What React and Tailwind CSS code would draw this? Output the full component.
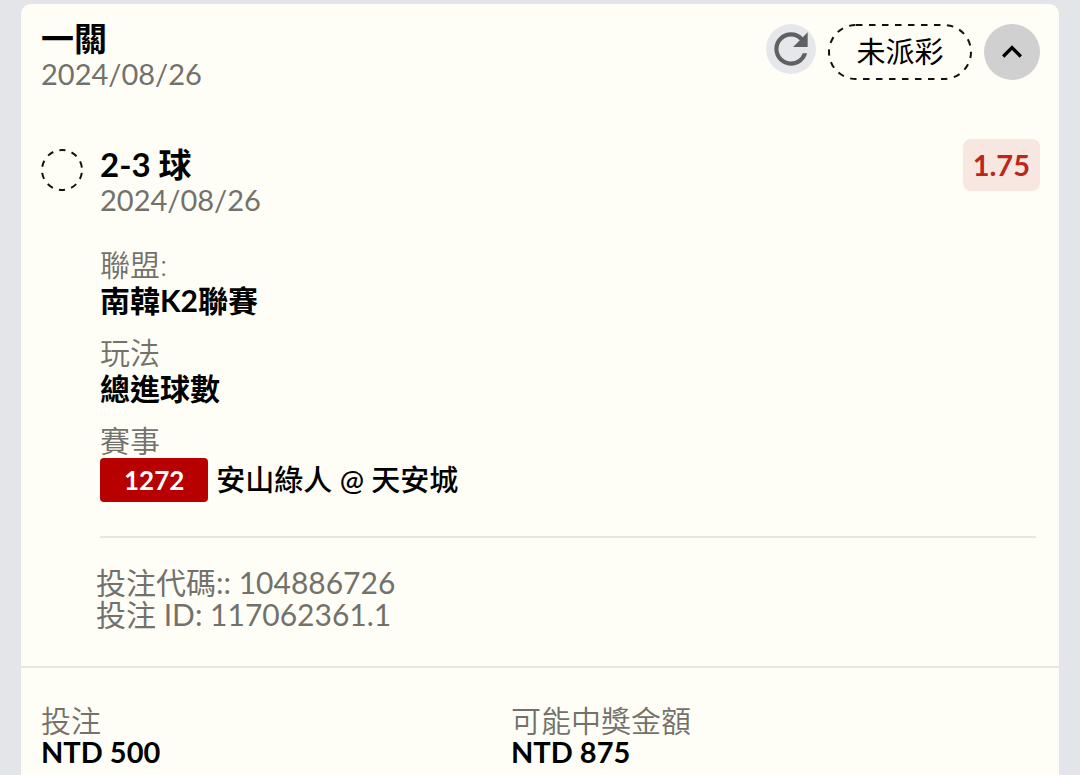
import { MdExpandLess, MdRefresh } from "react-icons/md";

function Field({ label, children, className = "font-bold" }) {
  return (
    <div>
      <dt className="font-[350] text-[#72716c]">{label}</dt>
      <dd className={className}>{children}</dd>
    </div>
  );
}

function Header() {
  return (
    <header className="flex items-start justify-between pt-4 pr-[19px] pl-5">
      <div>
        <h1 className="text-[33px] leading-9 font-bold">一關</h1>
        <p className="text-[29px] leading-9 text-[#72716c]">2024/08/26</p>
      </div>
      <div className="flex items-start gap-3 pt-1">
        <button
          type="button"
          aria-label="重新整理"
          className="flex size-[50px] items-center justify-center rounded-full bg-[#e6e7ea] text-[#5f6062]"
        >
          <MdRefresh className="size-[50px]" />
        </button>
        <div className="relative flex h-14 w-36 items-center justify-center">
          <svg className="absolute inset-0 size-full" viewBox="0 0 144 56" fill="none" aria-hidden="true">
            <rect x="1" y="1" width="142" height="54" rx="27" stroke="#111" strokeWidth="2" strokeDasharray="6.5 6.5" />
          </svg>
          <span className="text-[29px] leading-9">未派彩</span>
        </div>
        <button
          type="button"
          aria-label="收合"
          aria-expanded="true"
          className="flex size-14 items-center justify-center rounded-full bg-[#d0d0d0]"
        >
          <MdExpandLess className="size-10" />
        </button>
      </div>
    </header>
  );
}

function Selection() {
  return (
    <section className="flex items-start pt-[47px] pr-[19px] pb-9 pl-5">
      <svg className="mt-2.5 size-[42px] shrink-0" viewBox="0 0 42 42" fill="none" aria-hidden="true">
        <circle cx="21" cy="21" r="20" stroke="#111" strokeWidth="2" strokeDasharray="6.28 6.28" strokeDashoffset="-3" />
      </svg>
      <div className="ml-[17px] flex-1">
        <div className="flex items-start justify-between">
          <div className="pt-[7px]">
            <h2 className="text-[33px] leading-9 font-bold">2-3 球</h2>
            <p className="text-[29px] leading-9 text-[#72716c]">2024/08/26</p>
          </div>
          <span className="rounded-lg bg-[#f8e6e0] px-2.5 py-2 text-[29px] leading-9 font-bold text-[#bb261d]">1.75</span>
        </div>
        <dl className="flex flex-col gap-4 pt-7">
          <Field label="聯盟:">南韓K2聯賽</Field>
          <Field label="玩法">總進球數</Field>
          <div>
            <dt className="font-[350] text-[#72716c]">賽事</dt>
            <dd className="flex items-center gap-2 font-medium">
              <span className="rounded bg-[#b80000] px-6 py-1 text-[26px] leading-9 font-bold text-white">1272</span>
              <span className="text-[29px] leading-9">安山綠人 @ 天安城</span>
            </dd>
          </div>
        </dl>
        <hr className="mt-[34px] mr-1 border-t-2 border-[#e9e5e0]" />
        <div className="-ml-1 pt-7 leading-8 text-[#72716c]">
          <p>投注代碼:: 104886726</p>
          <p>投注 ID: 117062361.1</p>
        </div>
      </div>
    </section>
  );
}

export default function App() {
  return (
    <div className="flex min-h-screen flex-col bg-[#e4e5e8] px-[21px] pt-1 font-['Lato','Noto_Sans_CJK_TC',sans-serif] text-[30px] leading-9 text-black">
      <main className="flex-1 rounded-t-[10px] bg-[#fffef6]">
        <Header />
        <Selection />
        <footer className="border-t-2 border-[#e9e5e0] pt-9 pl-5">
          <dl className="grid grid-cols-[470fr_548fr] leading-8">
            <Field label="投注" className="text-[29px] leading-8 font-bold">NTD 500</Field>
            <Field label="可能中獎金額" className="text-[29px] leading-8 font-bold">NTD 875</Field>
          </dl>
        </footer>
      </main>
    </div>
  );
}
